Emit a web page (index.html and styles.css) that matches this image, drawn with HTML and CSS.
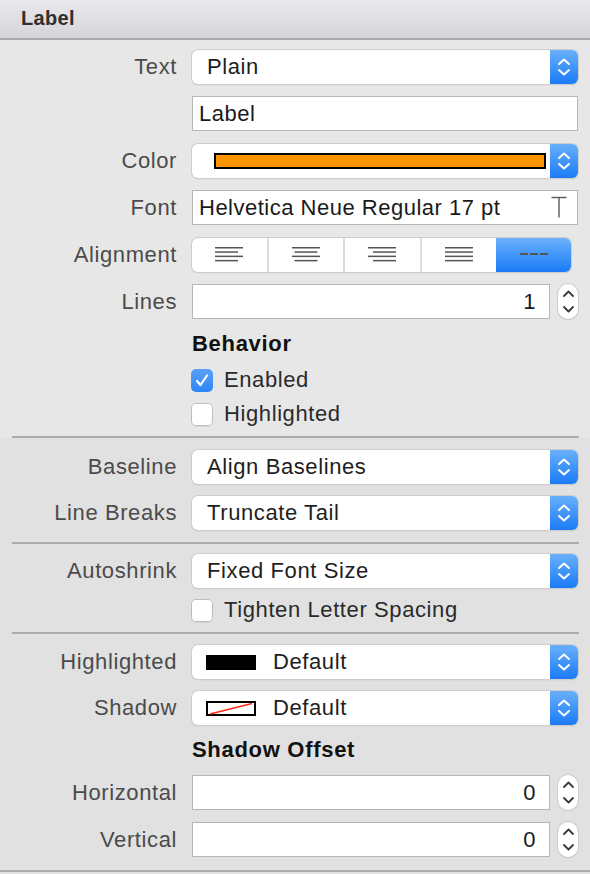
FILE: index.html
```html
<!DOCTYPE html>
<html>
<head>
<meta charset="utf-8">
<link rel="stylesheet" href="styles.css">
</head>
<body>
<div class="inspector">
  <div class="header">Label</div>

  <section class="sec sec-light">
    <div class="row row47">
      <span class="lbl">Text</span>
      <div class="popup"><span class="val">Plain</span><span class="arrows"><svg width="28" height="34" viewBox="0 0 28 34"><polyline points="9,14 14,9.5 19,14" /><polyline points="9,20 14,24.5 19,20" /></svg></span></div>
    </div>
    <div class="row row47">
      <span class="lbl"></span>
      <div class="field"><span class="fval">Label</span></div>
    </div>
    <div class="row row47">
      <span class="lbl">Color</span>
      <div class="popup"><span class="swatch-wide"></span><span class="arrows"><svg width="28" height="34" viewBox="0 0 28 34"><polyline points="9,14 14,9.5 19,14" /><polyline points="9,20 14,24.5 19,20" /></svg></span></div>
    </div>
    <div class="row row47">
      <span class="lbl">Font</span>
      <div class="field"><span class="fval">Helvetica Neue Regular 17 pt</span><svg class="t-icon" width="16" height="22" viewBox="0 0 16 22"><line x1="0.5" y1="1.5" x2="15.5" y2="1.5" /><line x1="8" y1="1.5" x2="8" y2="21.5" /></svg></div>
    </div>
    <div class="row row47">
      <span class="lbl">Alignment</span>
      <div class="segmented">
        <span class="seg"><svg width="28" height="15" viewBox="0 0 28 15"><rect x="0" y="0" width="28" height="1.5"/><rect x="0" y="4.3" width="23" height="1.5"/><rect x="0" y="8.6" width="28" height="1.5"/><rect x="0" y="12.9" width="23" height="1.5"/></svg></span>
        <span class="seg"><svg width="28" height="15" viewBox="0 0 28 15"><rect x="0" y="0" width="28" height="1.5"/><rect x="2.5" y="4.3" width="23" height="1.5"/><rect x="0" y="8.6" width="28" height="1.5"/><rect x="2.5" y="12.9" width="23" height="1.5"/></svg></span>
        <span class="seg"><svg width="28" height="15" viewBox="0 0 28 15"><rect x="0" y="0" width="28" height="1.5"/><rect x="5" y="4.3" width="23" height="1.5"/><rect x="0" y="8.6" width="28" height="1.5"/><rect x="5" y="12.9" width="23" height="1.5"/></svg></span>
        <span class="seg"><svg width="28" height="15" viewBox="0 0 28 15"><rect x="0" y="0" width="28" height="1.5"/><rect x="0" y="4.3" width="28" height="1.5"/><rect x="0" y="8.6" width="28" height="1.5"/><rect x="0" y="12.9" width="28" height="1.5"/></svg></span>
        <span class="seg seg-on"><svg width="28" height="3" viewBox="0 0 28 3"><rect x="0" y="0" width="8" height="2"/><rect x="10" y="0" width="8" height="2"/><rect x="20" y="0" width="8" height="2"/></svg></span>
      </div>
    </div>
    <div class="row row47">
      <span class="lbl">Lines</span>
      <div class="numwrap">
        <div class="field num"><span class="fval">1</span></div>
        <span class="stepper"><svg width="20" height="35" viewBox="0 0 20 35"><polyline points="6,12 10.5,7.5 15,12" /><polyline points="6,23 10.5,27.5 15,23" /></svg></span>
      </div>
    </div>
    <div class="row row38">
      <span class="lbl"></span>
      <span class="heading">Behavior</span>
    </div>
    <div class="row row34">
      <span class="lbl"></span>
      <label class="check"><span class="box box-on"><svg width="22" height="23" viewBox="0 0 22 23"><polyline points="6,12 9.5,16 16,6.5" /></svg></span><span class="ctext">Enabled</span></label>
    </div>
    <div class="row row34">
      <span class="lbl"></span>
      <label class="check"><span class="box"></span><span class="ctext">Highlighted</span></label>
    </div>
  </section>
  <div class="sep sep-light"><div class="sep-line"></div></div>

  <section class="sec sec2">
    <div class="row row46">
      <span class="lbl">Baseline</span>
      <div class="popup"><span class="val">Align Baselines</span><span class="arrows"><svg width="28" height="34" viewBox="0 0 28 34"><polyline points="9,14 14,9.5 19,14" /><polyline points="9,20 14,24.5 19,20" /></svg></span></div>
    </div>
    <div class="row row46">
      <span class="lbl">Line Breaks</span>
      <div class="popup"><span class="val">Truncate Tail</span><span class="arrows"><svg width="28" height="34" viewBox="0 0 28 34"><polyline points="9,14 14,9.5 19,14" /><polyline points="9,20 14,24.5 19,20" /></svg></span></div>
    </div>
  </section>
  <div class="sep"><div class="sep-line"></div></div>

  <section class="sec sec3">
    <div class="row row46">
      <span class="lbl">Autoshrink</span>
      <div class="popup"><span class="val">Fixed Font Size</span><span class="arrows"><svg width="28" height="34" viewBox="0 0 28 34"><polyline points="9,14 14,9.5 19,14" /><polyline points="9,20 14,24.5 19,20" /></svg></span></div>
    </div>
    <div class="row row32">
      <span class="lbl"></span>
      <label class="check"><span class="box"></span><span class="ctext">Tighten Letter Spacing</span></label>
    </div>
  </section>
  <div class="sep"><div class="sep-line"></div></div>

  <section class="sec sec4">
    <div class="row row46">
      <span class="lbl">Highlighted</span>
      <div class="popup"><span class="swatch-black"></span><span class="val val-sw">Default</span><span class="arrows"><svg width="28" height="34" viewBox="0 0 28 34"><polyline points="9,14 14,9.5 19,14" /><polyline points="9,20 14,24.5 19,20" /></svg></span></div>
    </div>
    <div class="row row46">
      <span class="lbl">Shadow</span>
      <div class="popup"><svg class="swatch-none" width="50" height="15" viewBox="0 0 50 15"><rect x="1" y="1" width="48" height="13" fill="#fff" stroke="#000" stroke-width="2"/><line x1="4" y1="13" x2="46" y2="2.5" stroke="#ff2a12" stroke-width="1.6"/></svg><span class="val val-sw">Default</span><span class="arrows"><svg width="28" height="34" viewBox="0 0 28 34"><polyline points="9,14 14,9.5 19,14" /><polyline points="9,20 14,24.5 19,20" /></svg></span></div>
    </div>
    <div class="row row38">
      <span class="lbl"></span>
      <span class="heading">Shadow Offset</span>
    </div>
    <div class="row row47">
      <span class="lbl">Horizontal</span>
      <div class="numwrap">
        <div class="field num"><span class="fval">0</span></div>
        <span class="stepper"><svg width="20" height="35" viewBox="0 0 20 35"><polyline points="6,12 10.5,7.5 15,12" /><polyline points="6,23 10.5,27.5 15,23" /></svg></span>
      </div>
    </div>
    <div class="row row47">
      <span class="lbl">Vertical</span>
      <div class="numwrap">
        <div class="field num"><span class="fval">0</span></div>
        <span class="stepper"><svg width="20" height="35" viewBox="0 0 20 35"><polyline points="6,12 10.5,7.5 15,12" /><polyline points="6,23 10.5,27.5 15,23" /></svg></span>
      </div>
    </div>
  </section>
  <div class="bottom-line"></div>
</div>
</body>
</html>
```

FILE: styles.css
```css
* { box-sizing: border-box; }
html, body { margin: 0; padding: 0; }
body {
  background: #e1e1e1;
  font-family: "Liberation Sans", Arial, sans-serif;
  font-size: 22px;
  color: #1e1e1e;
}
.inspector { width: 590px; }

.header {
  height: 40px;
  padding-left: 21px;
  display: flex;
  align-items: center;
  padding-bottom: 2px;
  font-weight: bold;
  font-size: 20px;
  letter-spacing: 0.3px;
  color: #2f2f2f;
  background: linear-gradient(#e9e9ed, #d4d4da);
  border-bottom: 2px solid #a9a9a9;
}

.sec { display: flex; flex-direction: column; }
.sec-light { background: #e7e7e7; padding: 3px 0 5px; }
.sec2 { padding: 6px 0 6px; }
.sec3 { padding: 4px 0 6px; }
.sec4 { padding: 5px 0 7px; }

.sep { height: 2px; padding: 0 11px 0 12px; }
.sep-light { background: #e7e7e7; }
.sep-line { height: 2px; background: #acacac; }
.bottom-line { height: 2px; background: #acacac; }

.row {
  display: grid;
  grid-template-columns: 178px 1fr;
  column-gap: 14px;
  align-items: center;
  padding-right: 12px;
}
.row47 { height: 47px; }
.row46 { height: 46px; }
.row38 { height: 38px; }
.row34 { height: 34px; }
.row32 { height: 32px; }

.lbl {
  text-align: right;
  color: #4b4b4b;
  letter-spacing: 0.6px;
  padding-right: 1px;
}

.popup {
  position: relative;
  height: 34px;
  background: #fff;
  border-radius: 6px;
  box-shadow: 0 0 0 1px #cdcdcd, 0 1px 1px 0 rgba(0,0,0,0.25);
  display: flex;
  align-items: center;
  padding-left: 15px;
  overflow: hidden;
}
.val { color: #1e1e1e; letter-spacing: 0.6px; }
.val-sw { margin-left: 17px; }
.arrows {
  position: absolute;
  right: 0; top: 0;
  width: 28px; height: 34px;
  background: linear-gradient(#68b0fb, #1b7bf6);
}
.arrows svg { display: block; }
.arrows polyline, .stepper polyline {
  fill: none;
  stroke-width: 2;
  stroke-linecap: round;
  stroke-linejoin: round;
}
.arrows polyline { stroke: #fff; }

.swatch-wide {
  display: block;
  margin-left: 7px;
  width: 332px;
  height: 16px;
  background: #ff9500;
  border: 2px solid #000;
}
.swatch-black {
  display: block;
  margin-left: -1px;
  width: 50px;
  height: 15px;
  background: #000;
}
.swatch-none { display: block; margin-left: -1px; }

.field {
  height: 35px;
  background: #fff;
  border: 1px solid #b6b6b6;
  display: flex;
  align-items: center;
  padding-left: 6px;
  padding-right: 10px;
}
.fval { color: #1a1a1a; letter-spacing: 0.5px; flex: 1; }
.t-icon { display: block; margin-top: -2px; }
.t-icon line { stroke: #585858; stroke-width: 1.4; }

.numwrap { display: flex; align-items: center; gap: 8px; }
.num { flex: 1; }
.num .fval { text-align: right; padding-right: 3px; }
.stepper {
  width: 20px; height: 35px;
  background: #fff;
  border-radius: 10px;
  box-shadow: 0 0 0 1px #cfcfcf, 0 1px 1px 0 rgba(0,0,0,0.2);
}
.stepper svg { display: block; }
.stepper polyline { stroke: #3a3a3a; stroke-width: 1.8; }

.segmented {
  display: flex;
  height: 34px;
  margin-right: 7px;
  background: #fff;
  border-radius: 6px;
  box-shadow: 0 0 0 1px #cdcdcd, 0 1px 1px 0 rgba(0,0,0,0.2);
  overflow: hidden;
}
.seg {
  flex: 1;
  display: flex;
  align-items: center;
  justify-content: center;
  border-left: 2px solid #dcdcdc;
}
.seg:first-child { border-left: none; }
.seg svg { display: block; fill: #555; }
.seg-on {
  border-left: none;
  background: linear-gradient(#6ab2fc, #1a7af6);
}

.heading {
  font-weight: bold;
  color: #111;
  letter-spacing: 0.7px;
}

.check { display: flex; align-items: center; gap: 11px; margin-left: -1px; }
.box {
  width: 22px; height: 23px;
  border-radius: 5px;
  background: #fff;
  box-shadow: inset 0 0 0 1px #bdbdbd, 0 1px 0 0 rgba(0,0,0,0.06);
}
.box svg { display: block; }
.box-on {
  background: linear-gradient(#59a1f8, #2f86f5);
  box-shadow: none;
}
.box-on polyline {
  fill: none;
  stroke: #fff;
  stroke-width: 2.2;
  stroke-linecap: round;
  stroke-linejoin: round;
}
.ctext { color: #2a2a2a; letter-spacing: 0.6px; }
```
